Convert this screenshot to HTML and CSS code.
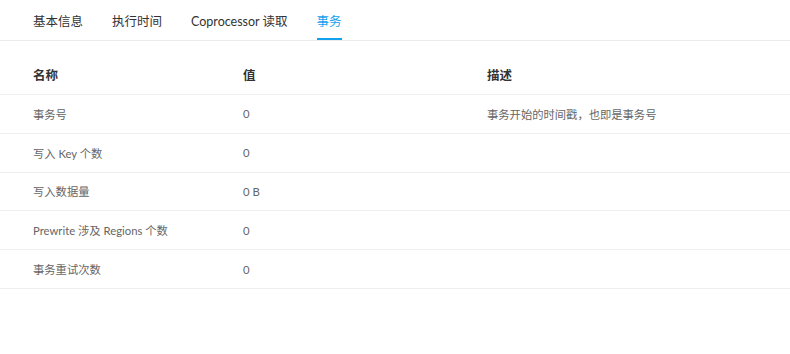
FILE: index.html
```html
<!DOCTYPE html>
<html lang="zh-CN">
<head>
    <meta charset="utf-8">
    <title>事务</title>
    <link rel="stylesheet" href="styles.css">
</head>
<body>

<div class="tabs">
    <a class="tab">基本信息</a>
    <a class="tab">执行时间</a>
    <a class="tab">Coprocessor 读取</a>
    <a class="tab active">事务</a>
</div>

<div class="table">
    <div class="row head">
        <div>名称</div>
        <div>值</div>
        <div>描述</div>
    </div>
    <div class="row">
        <div>事务号</div>
        <div>0</div>
        <div>事务开始的时间戳，也即是事务号</div>
    </div>
    <div class="row">
        <div>写入 Key 个数</div>
        <div>0</div>
        <div></div>
    </div>
    <div class="row">
        <div>写入数据量</div>
        <div>0 B</div>
        <div></div>
    </div>
    <div class="row">
        <div>Prewrite 涉及 Regions 个数</div>
        <div>0</div>
        <div></div>
    </div>
    <div class="row">
        <div>事务重试次数</div>
        <div>0</div>
        <div></div>
    </div>
</div>

</body>
</html>
```

FILE: styles.css
```css
body {
    margin: 0;
    font-family: Lato, "Noto Sans CJK SC", sans-serif;
    color: #333;
    background: #fff;
}

.tabs {
    display: flex;
    gap: 29px;
    padding-left: 33px;
    height: 40px;
    border-bottom: 1px solid #ececec;
}

.tab {
    display: flex;
    align-items: center;
    font-size: 12.5px;
    color: #333;
    border-bottom: 2px solid transparent;
    padding-top: 2px;
    cursor: pointer;
}

.tab.active {
    color: #11a1ee;
    border-bottom-color: #11a1ee;
}

.row {
    display: grid;
    grid-template-columns: 210px 244px 1fr;
    padding-left: 33px;
    height: 38.8px;
    box-sizing: border-box;
    align-items: center;
    border-bottom: 1px solid #eeeeee;
    font-size: 11.3px;
    color: #666;
}

.row.head {
    height: 54px;
    padding-top: 13px;
    font-size: 12.5px;
    font-weight: bold;
    color: #333;
}
```
